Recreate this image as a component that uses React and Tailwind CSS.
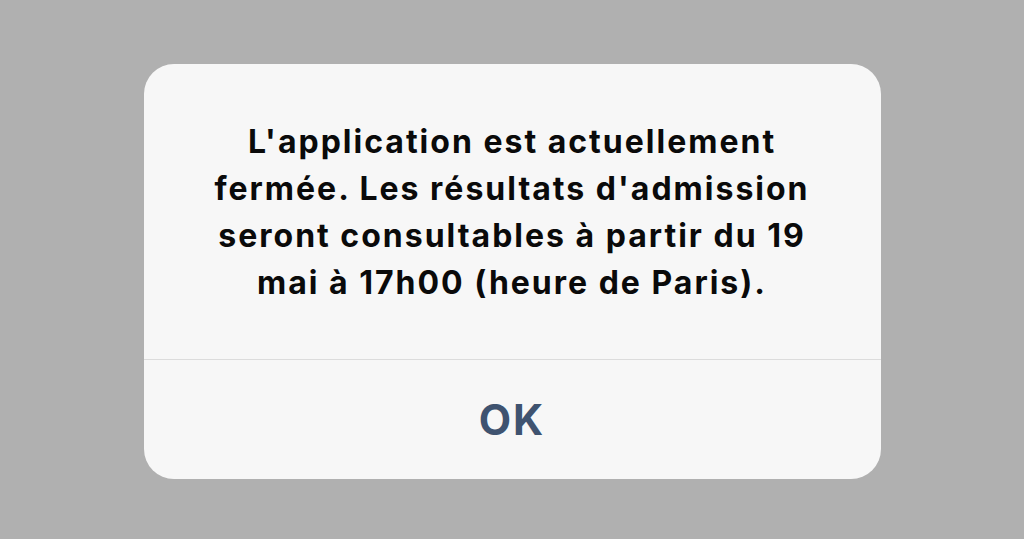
export default function App() {
  return (
    <div className="w-[1024px] h-[539px] bg-[#b0b0b0] flex items-center justify-center" style={{ fontFamily: 'Inter, "Liberation Sans", Arial, sans-serif' }}>
      <div className="w-[737px] h-[415px] mt-[4px] bg-[#f7f7f7] rounded-[30px] flex flex-col overflow-hidden">
        <div className="h-[295px] flex items-center justify-center">
          <p className="text-center font-bold text-[32px] leading-[47px] tracking-[2px] text-[#0a0a0a] whitespace-nowrap">
            L'application est actuellement<br />
            fermée. Les résultats d'admission<br />
            seront consultables à partir du 19<br />
            mai à 17h00 (heure de Paris).
          </p>
        </div>
        <div className="h-px bg-[#dcdcdc]" />
        <div className="flex-1 flex items-center justify-center">
          <span className="font-bold text-[42px] tracking-[2px] text-[#3f5370]">OK</span>
        </div>
      </div>
    </div>
  );
}
